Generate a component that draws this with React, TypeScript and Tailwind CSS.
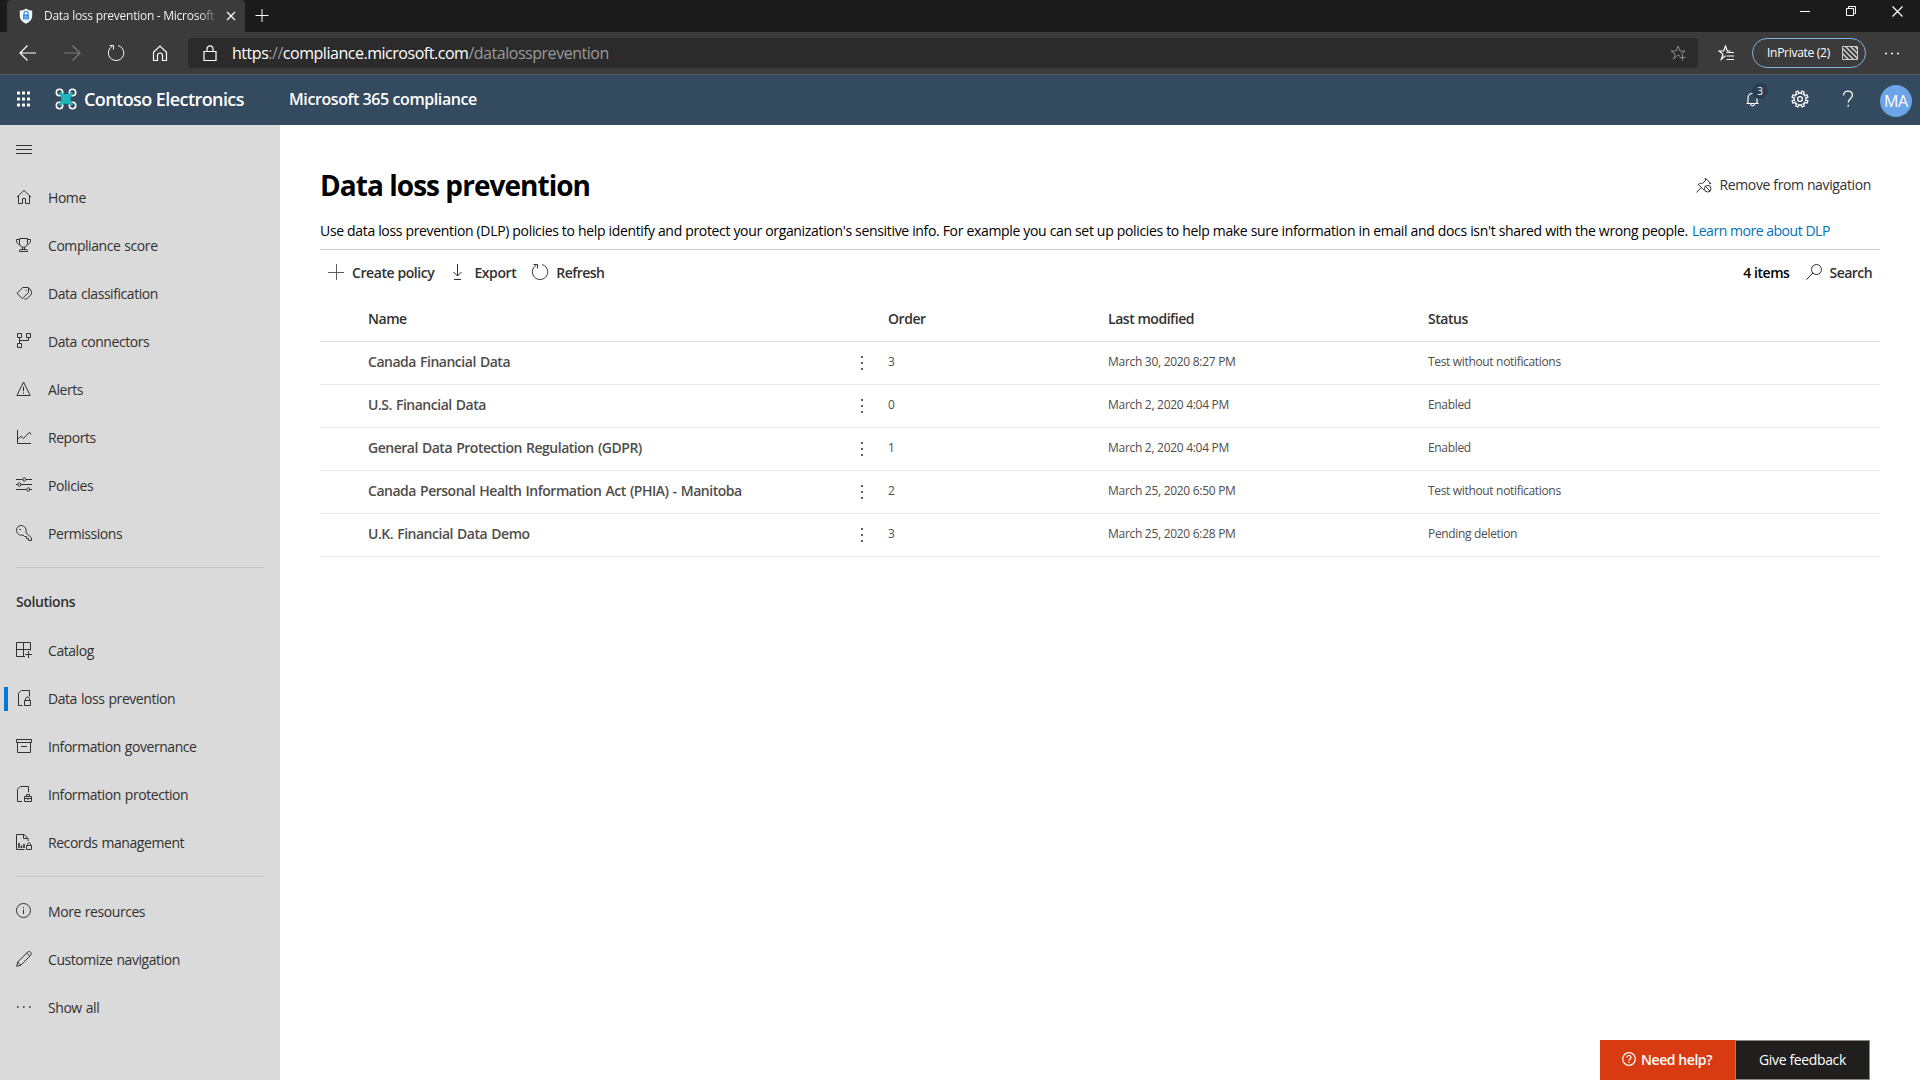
import type { ReactNode } from "react";

function Icon({ size = 16, className = "", children }: { size?: number; className?: string; children: ReactNode }) {
  return (
    <svg
      width={size}
      height={size}
      viewBox={`0 0 ${size} ${size}`}
      fill="none"
      stroke="currentColor"
      strokeWidth={1}
      className={`shrink-0 ${className}`}
    >
      {children}
    </svg>
  );
}

const HomeIcon = () => (
  <Icon>
    <path d="M.9 8.2 8 1.4l7.1 6.8M2.5 6.8v7.7h4v-5h3v5h4V6.8" />
  </Icon>
);
const TrophyIcon = () => (
  <Icon>
    <path d="M3.500 1.500h8v5c0 2.200-1.800 3.800-4 3.800s-4-1.600-4-3.800zM3.500 2.500h-3v1.300c0 2 1.400 3.400 3.400 3.700M11.500 2.500h3v1.300c0 2-1.400 3.400-3.400 3.700M6.500 10.200v2.300M8.500 10.200v2.300M3.500 14.500v-.7c0-.8.5-1.300 1.300-1.300h5.400c.8 0 1.300.5 1.300 1.300v.7z" />
  </Icon>
);
const TagIcon = () => (
  <Icon>
    <path d="M6.800 2.500h5.700v5L6.300 13.600.9 8.300zM13 3.600c1.500.5 2.500 2 2.500 4 0 1.200-.4 2-1.100 2.800l-3.200 3.100c-.9.8-1.900.9-2.900.2M9.600 5.500h.9" />
  </Icon>
);
const ConnectorIcon = () => (
  <Icon>
    <path d="M1.500.5h4v4h-4zM10.500.5h4v4h-4zM1.500 10.500h4v4h-4zM3.500 4.500v6M12.500 4.500v3h-9" />
  </Icon>
);
const AlertIcon = () => (
  <Icon>
    <path d="M7.500 1 .9 14.500h13.300zM7.500 5.800v4.400M7.500 11.400v1.300" />
  </Icon>
);
const ReportIcon = () => (
  <Icon>
    <path d="M1.500 1v13.500H15M1.600 10.400l3.200-3.200 2.600 2.300 5.200-5.400 1.300-.6 1 2" />
  </Icon>
);
const SlidersIcon = () => (
  <Icon>
    <path d="M0 2.500h6.800M9.800 2.500H16M0 7.500h1.800M4.800 7.500H16M0 12.500h10.800M13.800 12.500H16" />
    <ellipse cx="8.300" cy="2.500" rx="1.400" ry="1.800" />
    <ellipse cx="3.300" cy="7.500" rx="1.400" ry="1.800" />
    <ellipse cx="12.300" cy="12.500" rx="1.400" ry="1.800" />
  </Icon>
);
const KeyIcon = () => (
  <Icon>
    <path d="M15.500 15.500v-2.600L10 7.800c.9-3.800-1.200-7.300-4.800-7.300C2.600.5.500 2.600.5 5.200c0 3.500 3 5.700 6.600 4.900L8.500 11.500h2v2h2v2zM3.300 4.500h1.600" />
  </Icon>
);
const CatalogIcon = () => (
  <Icon>
    <path d="M9 14.500H.5V.5h14v8M.5 7.500h14M7.500.5v14M12.500 9v7M9 12.500h7" />
  </Icon>
);
const DocLockIcon = () => (
  <Icon>
    <path d="M6.500 15.500h-4V3.300L5.300.5h8.200v6M8.500 10.500h6v5h-6zM9.500 10.500V9c0-1.100.9-2 2-2s2 .9 2 2v1.500" />
  </Icon>
);
const ArchiveIcon = () => (
  <Icon>
    <path d="M.5 1.500h15v3H.5zM1.500 4.500v10h13v-10M5 8.500h6" />
  </Icon>
);
const DocCaseIcon = () => (
  <Icon>
    <path d="M6 15.500H1.500V3.300L4.300.5h8.200v6M8.500 10.500h7v5h-7zM10.500 10.500v-2h3v2M8.500 12.500h7M12 11.800v2" />
  </Icon>
);
const RecordsIcon = () => (
  <Icon>
    <path d="M8.500 15.500h-8V.5h7.800l3.700 4V7M7.500.5v4h4.200" />
    <path d="M3 9v5M5.500 11.500V14M8 10v4" strokeWidth={1.6} />
    <path d="M10.500 11.500h5v4h-5zM11.500 11.500v-1.300c0-.9.7-1.500 1.500-1.500s1.500.6 1.500 1.500v1.300" />
  </Icon>
);
const InfoIcon = () => (
  <Icon>
    <circle cx="7.500" cy="7.500" r="7" />
    <path d="M7.500 6.500V11M7.500 4v1.200" />
  </Icon>
);
const PencilIcon = () => (
  <Icon>
    <path d="M.7 15.300l1-4.300L11.800 1c1.700-1.500 4.700 1 3 3.100L4.900 14.200zM1.700 11l3.200 3.200M10.700 2.100l3.100 3.100" />
  </Icon>
);
const MoreIcon = () => (
  <Icon>
    <path d="M1 8h1.600M7 8h1.600M13 8h1.600" strokeWidth={1.6} />
  </Icon>
);

const mainNav = [
  { label: "Home", icon: <HomeIcon /> },
  { label: "Compliance score", icon: <TrophyIcon /> },
  { label: "Data classification", icon: <TagIcon /> },
  { label: "Data connectors", icon: <ConnectorIcon /> },
  { label: "Alerts", icon: <AlertIcon /> },
  { label: "Reports", icon: <ReportIcon /> },
  { label: "Policies", icon: <SlidersIcon /> },
  { label: "Permissions", icon: <KeyIcon /> },
];
const solutionNav = [
  { label: "Catalog", icon: <CatalogIcon /> },
  { label: "Data loss prevention", icon: <DocLockIcon />, active: true },
  { label: "Information governance", icon: <ArchiveIcon /> },
  { label: "Information protection", icon: <DocCaseIcon /> },
  { label: "Records management", icon: <RecordsIcon /> },
];
const footerNav = [
  { label: "More resources", icon: <InfoIcon /> },
  { label: "Customize navigation", icon: <PencilIcon /> },
  { label: "Show all", icon: <MoreIcon /> },
];

const policies = [
  { name: "Canada Financial Data", order: 3, modified: "March 30, 2020 8:27 PM", status: "Test without notifications" },
  { name: "U.S. Financial Data", order: 0, modified: "March 2, 2020 4:04 PM", status: "Enabled" },
  { name: "General Data Protection Regulation (GDPR)", order: 1, modified: "March 2, 2020 4:04 PM", status: "Enabled" },
  { name: "Canada Personal Health Information Act (PHIA) - Manitoba", order: 2, modified: "March 25, 2020 6:50 PM", status: "Test without notifications" },
  { name: "U.K. Financial Data Demo", order: 3, modified: "March 25, 2020 6:28 PM", status: "Pending deletion" },
];

function NavItem({ label, icon, active }: { label: string; icon: ReactNode; active?: boolean }) {
  return (
    <li className="flex h-12 items-center">
      <span className={`ml-1 h-6 w-1 ${active ? "bg-[#0078d4]" : ""}`} />
      <span className="mb-0.5 ml-2 flex">{icon}</span>
      <span className="ml-4 text-[14px] leading-5 tracking-[-0.44px] [word-spacing:0.8px]">{label}</span>
    </li>
  );
}

function RefreshGlyph({ className = "" }: { className?: string }) {
  return (
    <Icon size={18} className={className}>
      <path d="M11.200 1.600c3.300.9 5.600 3.900 5.600 7.200 0 4.200-3.400 7.700-7.700 7.700s-7.700-3.400-7.700-7.700c0-2.900 1.600-5.300 4-6.600M2.500 1.500h4v4" />
    </Icon>
  );
}

function TabStrip() {
  return (
    <div className="flex h-8 bg-[#1b1b1b] text-white">
      <div className="ml-[7px] flex w-[238px] items-center rounded-t-[4px] bg-[#3b3b3b] pl-3">
        <svg width="14" height="16" viewBox="0 0 14 16" className="shrink-0">
          <path d="M7 .5c1.800 1.400 3.800 2 6.200 2v5.300c0 3.700-2.700 6.300-6.200 7.900C3.500 14.100.8 11.500.8 7.800V2.500C3.200 2.500 5.200 1.900 7 .5z" fill="#f3f8fd" />
          <path d="M5 7V5.400a2 2 0 0 1 4 0V7" fill="none" stroke="#3a8ee0" strokeWidth="1.200" />
          <path d="M4 6.500h6v5H4z" fill="#3a8ee0" />
          <path d="M5 8.500h4M5 10.300h4" stroke="#8cc1f5" strokeWidth="0.800" />
        </svg>
        <span className="ml-[11px] w-[171px] overflow-hidden whitespace-nowrap bg-linear-to-r from-white from-90% to-[#6a6a6a] bg-clip-text text-[12px] leading-4 tracking-[-0.26px] text-transparent">
          Data loss prevention - Microsoft
        </span>
        <Icon size={10} className="ml-[11px]">
          <path d="M1 1l8 8M9 1L1 9" strokeWidth={1.2} />
        </Icon>
      </div>
      <Icon size={14} className="ml-[10px] mt-[9px]">
        <path d="M.5 6.500h13M7 0v13" />
      </Icon>
      <div className="ml-auto flex gap-9 pr-[17px] pt-[6px]">
        <Icon size={10}>
          <path d="M0 5.500h10" />
        </Icon>
        <Icon size={10}>
          <path d="M.5 2.500h7v7h-7zM2.500 2.500v-2h7v7h-2" />
        </Icon>
        <Icon size={11}>
          <path d="M.5.5l10 10M10.500.5l-10 10" strokeWidth={1.2} />
        </Icon>
      </div>
    </div>
  );
}

function AddressRow() {
  return (
    <div className="flex h-[43px] items-center border-b border-[#5c5c5c] bg-[#3b3b3b] text-white">
      <Icon size={18} className="ml-[19px]">
        <path d="M17 9H1.500M8.500 1.500 1 9l7.500 7.500" strokeWidth={1.2} />
      </Icon>
      <Icon size={18} className="ml-[26px] text-[#7b7b7b]">
        <path d="M1 9h15.500M9.500 1.500 17 9l-7.500 7.500" strokeWidth={1.2} />
      </Icon>
      <RefreshGlyph className="ml-[26px]" />
      <Icon size={16} className="ml-[27px]">
        <path d="M1.500 7.200 8 1l6.500 6.200v8.300h-4v-5c0-1.400-1.100-2.500-2.500-2.500s-2.500 1.100-2.500 2.500v5h-4z" strokeWidth={1.2} />
      </Icon>
      <div className="ml-5 flex h-[30px] w-[1510px] items-center rounded-[4px] bg-[#2b2b2b]">
        <Icon size={16} className="ml-[14px]">
          <path d="M2 6.500h12v9H2zM5 6.500V4a3 3.200 0 0 1 6 0v2.500" strokeWidth={1.2} />
        </Icon>
        <span className="ml-[14px] text-[16px] leading-6 tracking-[-0.47px] text-[#9a9a9a]">
          <span className="text-white">https</span>://<span className="text-white">compliance.microsoft.com</span>/datalossprevention
        </span>
        <Icon size={17} className="ml-auto mr-[11px] text-[#8c8c8c]">
          <path d="M10 11.200 8 9.900 3.600 14.300l1.600-5.200L1 6h5.100L8 1l1.900 5H15l-3.800 2.900M9.500 12.500h6M12.500 9.500v6" />
        </Icon>
      </div>
      <Icon size={17} className="ml-5">
        <path d="M7.500 10.800l-4.200 3.500 1.700-5.200L1 6h4.700L7.500 1l1.700 5h3.300M8.500 7.500H16M8.500 11H16M8.500 14.500H16" strokeWidth={1.2} />
      </Icon>
      <div className="ml-[17px] flex h-[30px] w-[114px] items-center rounded-full border border-[#7fb2df] pl-[14px]">
        <span className="text-[12px] leading-4 tracking-[-0.28px]">InPrivate (2)</span>
        <svg width="16" height="14" viewBox="0 0 16 14" className="ml-3 shrink-0 text-[#d0d0d0]" fill="none" stroke="currentColor">
          <path d="M.5.5h15v13H.5z" />
          <path d="M0 2l12 12M3 0l13 13M8 0l8 8M0 7l7 7M12.500 0 16 3.500" strokeWidth="1.500" />
        </svg>
      </div>
      <Icon size={14} className="ml-[19px]">
        <path d="M0 7.500h2M6 7.500h2M12 7.500h2" strokeWidth={1.5} />
      </Icon>
    </div>
  );
}

function SuiteHeader() {
  const gearTeeth = [22.5, 67.5, 112.5, 157.5, 202.5, 247.5, 292.5, 337.5];
  return (
    <header className="flex h-[50px] items-center bg-[#344a5e] pb-[3px] text-white">
      <svg width="14" height="16" viewBox="0 0 14 16" fill="currentColor" className="ml-[17px] mt-px shrink-0">
        {[0.5, 6.5, 12.5].map((y) => [0, 5, 10].map((x) => <rect key={`${x}-${y}`} x={x} y={y} width="3" height="3" rx="0.500" />))}
      </svg>
      <svg width="22" height="22" viewBox="0 0 22 22" className="ml-6 shrink-0" fill="none">
        <g stroke="#fff" strokeWidth="1.600">
          <circle cx="4.500" cy="4.500" r="3.200" />
          <circle cx="17.500" cy="4.500" r="3.200" />
          <circle cx="4.500" cy="17.500" r="3.200" />
          <circle cx="17.500" cy="17.500" r="3.200" />
        </g>
        <path d="M4 5.600 5.600 4l3.200 2h4.400l3.200-2L18 5.600l-2.300 3.600v3.600l2.300 3.600-1.600 1.600-3.200-2.300H8.800L5.600 18 4 16.400l2.300-3.600V9.200z" fill="#1fb5bd" />
      </svg>
      <span className="ml-[7px] w-[205px] text-[18px] font-semibold leading-6 tracking-[-0.57px]">Contoso Electronics</span>
      <span className="text-[16px] font-semibold leading-6 tracking-[-0.41px]">Microsoft 365 compliance</span>
      <div className="ml-auto flex items-center pr-2">
        <span className="relative flex">
          <Icon>
            <path d="M4 13V7.500C4 4.600 5.800 2.500 8.500 2.500S13 4.600 13 7.500V12M2.500 12.500h12M6.500 13c.2 1.300 1 1.900 2 1.900s1.800-.6 2-1.900" strokeWidth={1.2} />
          </Icon>
          <span className="absolute -top-2 left-[8px] flex size-4 items-center justify-center rounded-full bg-[#2a3d50] text-[10px] leading-none">3</span>
        </span>
        <Icon size={18} className="ml-[31px]">
          <circle cx="9" cy="9" r="6" strokeWidth={1.3} />
          <circle cx="9" cy="9" r="2.400" strokeWidth={1.3} />
          {gearTeeth.map((a) => (
            <path key={a} d="M7.700 3V.9h2.600V3" strokeWidth={1.2} fill="#344a5e" transform={`rotate(${a} 9 9)`} />
          ))}
        </Icon>
        <Icon size={18} className="ml-[30px]">
          <path d="M4.500 5.500c0-2.500 1.700-4.300 4.400-4.300 2.700 0 4.500 1.600 4.500 4 0 3.500-4.200 3.600-4.200 7.300M9.200 14.800v2" strokeWidth={1.3} />
        </Icon>
        <span className="ml-[23px] mt-[5px] flex size-8 items-center justify-center rounded-full bg-[#6ba4e7] text-[16px] leading-none tracking-[-0.3px]">MA</span>
      </div>
    </header>
  );
}

function Sidebar() {
  return (
    <nav className="w-[280px] shrink-0 bg-[#dadada] text-[#323130]">
      <div className="flex h-[49px] items-center pl-4">
        <Icon>
          <path d="M0 3.500h16M0 7.500h16M0 11.500h16" />
        </Icon>
      </div>
      <ul>
        {mainNav.map((n) => (
          <NavItem key={n.label} {...n} />
        ))}
      </ul>
      <div className="mx-4 mt-[9px] h-px bg-[#c4c4c4]" />
      <div className="flex h-[59px] items-center pb-[1px] pl-4 pt-[9px] text-[14px] font-semibold tracking-[-0.4px]">Solutions</div>
      <ul>
        {solutionNav.map((n) => (
          <NavItem key={n.label} {...n} />
        ))}
      </ul>
      <div className="mx-4 mb-[11px] mt-[9px] h-px bg-[#c4c4c4]" />
      <ul>
        {footerNav.map((n) => (
          <NavItem key={n.label} {...n} />
        ))}
      </ul>
    </nav>
  );
}

function CommandBar() {
  return (
    <div className="flex h-[46px] items-center pb-0.5 pl-2 pr-2 text-[14px] font-semibold tracking-[-0.42px] text-[#323130]">
      <Icon className="text-[#605e5c]">
        <path d="M0 8.500h16M8.500 0v16" />
      </Icon>
      <span className="ml-2">Create policy</span>
      <Icon className="ml-[15px]">
        <path d="M8.500 0v12M4.500 8l4 4 4-4M5 15.500h7" />
      </Icon>
      <span className="ml-[9px]">Export</span>
      <RefreshGlyph className="ml-[15px]" />
      <span className="ml-[7px] tracking-[-0.55px]">Refresh</span>
      <span className="ml-auto text-black">4 items</span>
      <Icon className="ml-4">
        <circle cx="10.500" cy="5.500" r="5" />
        <path d="M7 9 .4 15.600" />
      </Icon>
      <span className="ml-2 tracking-[-0.55px]">Search</span>
    </div>
  );
}

function PolicyTable() {
  const columns = "grid grid-cols-[493px_27px_220px_320px_1fr] items-center pl-12";
  return (
    <div>
      <div className={`${columns} h-[46px] border-b border-[#e1e1e1] text-[14px] font-semibold tracking-[-0.46px] text-[#323130]`}>
        <span>Name</span>
        <span />
        <span>Order</span>
        <span>Last modified</span>
        <span>Status</span>
      </div>
      {policies.map((p) => (
        <div key={p.name} className={`${columns} h-[43px] border-b border-[#e8e8e8] pb-0.5 text-[12px] tracking-[-0.29px] text-[#4f4d4b]`}>
          <span className="pb-0.5 text-[14px] font-semibold tracking-[-0.49px] [word-spacing:1px]">{p.name}</span>
          <svg width="2" height="16" className="mt-0.5" fill="#605e5c">
            <rect y="1" width="2" height="2" />
            <rect y="7" width="2" height="2" />
            <rect y="13" width="2" height="2" />
          </svg>
          <span>{p.order}</span>
          <span>{p.modified}</span>
          <span className="tracking-[-0.33px]">{p.status}</span>
        </div>
      ))}
    </div>
  );
}

function Content() {
  return (
    <main className="flex flex-1 flex-col bg-white pl-10">
      <div className="mr-10 mt-[35px] flex h-[50px] items-center">
        <h1 className="text-[28px] font-bold leading-9 tracking-[-0.96px] text-black">Data loss prevention</h1>
        <div className="ml-auto flex items-center pr-[9px] text-[#323130]">
          <Icon>
            <path d="M.4 15.500 5 10.900M8 13.200 2.200 7.400c1.500-1.200 3.100-1.300 4.300-.9L9.600 3.400 9.200 1.300M9.200 1 15 6.600l-2 .1" />
            <circle cx="11.700" cy="11.700" r="3.300" />
            <path d="M9.400 9.400l4.600 4.600" />
          </Icon>
          <span className="ml-2 text-[14px] leading-5 tracking-[-0.37px]">Remove from navigation</span>
        </div>
      </div>
      <p className="mr-10 flex h-10 items-end whitespace-nowrap border-b border-[#c8c8c8] pb-2 text-[14px] leading-5 tracking-[-0.33px] text-black">
        Use data loss prevention (DLP) policies to help identify and protect your organization's sensitive info. For example you can set up policies to help make sure information in email and docs isn't shared with the wrong people.
        <a className="ml-1 tracking-[-0.47px] text-[#0072b8]">Learn more about DLP</a>
      </p>
      <div className="mr-10">
        <CommandBar />
        <PolicyTable />
      </div>
      <div className="mr-[50px] mt-auto flex h-10 justify-end text-[14px] text-white">
        <div className="flex w-[135px] items-center bg-[#d83b11] pb-0.5 pl-[22px] font-semibold tracking-[-0.43px]">
          <Icon size={14}>
            <circle cx="7" cy="7" r="6.300" strokeWidth={1.2} />
            <path d="M5 5.500c0-1.200.8-2 2-2s2 .8 2 1.900C9 7 7 7 7 8.800M7 9.800V11" strokeWidth={1.2} />
          </Icon>
          <span className="ml-[5px]">Need help?</span>
        </div>
        <div className="flex w-[135px] items-center justify-center border border-[#8a8886] bg-[#201f1e] pb-px font-medium tracking-[-0.36px]">Give feedback</div>
      </div>
    </main>
  );
}

export default function App() {
  return (
    <div className="flex h-[1080px] w-[1920px] flex-col overflow-hidden font-['Open_Sans','Noto_Sans',sans-serif]">
      <TabStrip />
      <AddressRow />
      <SuiteHeader />
      <div className="flex min-h-0 flex-1">
        <Sidebar />
        <Content />
      </div>
    </div>
  );
}
